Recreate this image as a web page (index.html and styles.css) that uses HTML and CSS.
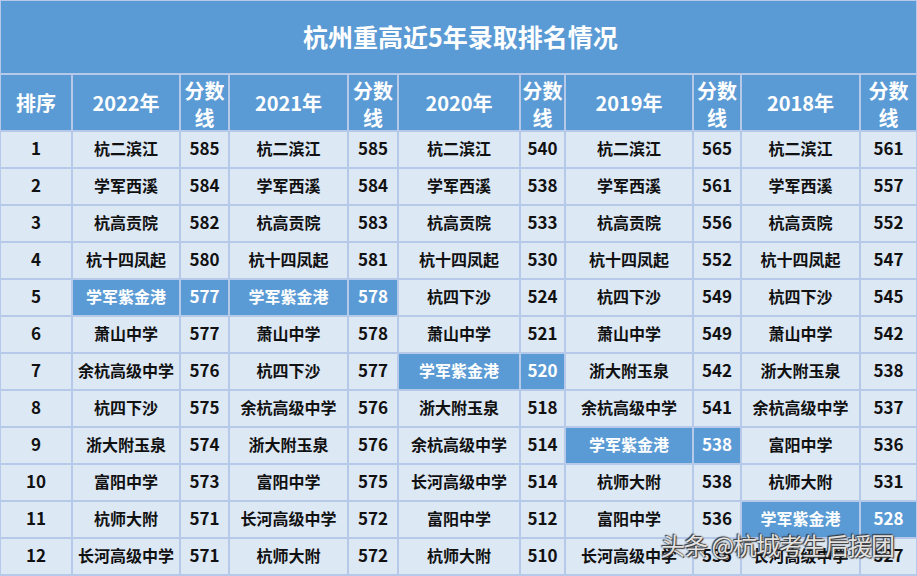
FILE: index.html
```html
<!DOCTYPE html>
<html lang="zh-CN">
<head>
<meta charset="utf-8">
<link rel="stylesheet" href="styles.css">
</head>
<body>
<div class="sheet">
  <div class="title">杭州重高近5年录取排名情况</div>
  <div class="hd">排序</div><div class="hd">2022年</div><div class="hd sc">分数线</div><div class="hd">2021年</div><div class="hd sc">分数线</div><div class="hd">2020年</div><div class="hd sc">分数线</div><div class="hd">2019年</div><div class="hd sc">分数线</div><div class="hd">2018年</div><div class="hd sc">分数线</div>

  <div class="c n">1</div><div class="c">杭二滨江</div><div class="c n">585</div><div class="c">杭二滨江</div><div class="c n">585</div><div class="c">杭二滨江</div><div class="c n">540</div><div class="c">杭二滨江</div><div class="c n">565</div><div class="c">杭二滨江</div><div class="c n">561</div>
  <div class="c n">2</div><div class="c">学军西溪</div><div class="c n">584</div><div class="c">学军西溪</div><div class="c n">584</div><div class="c">学军西溪</div><div class="c n">538</div><div class="c">学军西溪</div><div class="c n">561</div><div class="c">学军西溪</div><div class="c n">557</div>
  <div class="c n">3</div><div class="c">杭高贡院</div><div class="c n">582</div><div class="c">杭高贡院</div><div class="c n">583</div><div class="c">杭高贡院</div><div class="c n">533</div><div class="c">杭高贡院</div><div class="c n">556</div><div class="c">杭高贡院</div><div class="c n">552</div>
  <div class="c n">4</div><div class="c">杭十四凤起</div><div class="c n">580</div><div class="c">杭十四凤起</div><div class="c n">581</div><div class="c">杭十四凤起</div><div class="c n">530</div><div class="c">杭十四凤起</div><div class="c n">552</div><div class="c">杭十四凤起</div><div class="c n">547</div>
  <div class="c n">5</div><div class="c hl">学军紫金港</div><div class="c n hl">577</div><div class="c hl">学军紫金港</div><div class="c n hl">578</div><div class="c">杭四下沙</div><div class="c n">524</div><div class="c">杭四下沙</div><div class="c n">549</div><div class="c">杭四下沙</div><div class="c n">545</div>
  <div class="c n">6</div><div class="c">萧山中学</div><div class="c n">577</div><div class="c">萧山中学</div><div class="c n">578</div><div class="c">萧山中学</div><div class="c n">521</div><div class="c">萧山中学</div><div class="c n">549</div><div class="c">萧山中学</div><div class="c n">542</div>
  <div class="c n">7</div><div class="c">余杭高级中学</div><div class="c n">576</div><div class="c">杭四下沙</div><div class="c n">577</div><div class="c hl">学军紫金港</div><div class="c n hl">520</div><div class="c">浙大附玉泉</div><div class="c n">542</div><div class="c">浙大附玉泉</div><div class="c n">538</div>
  <div class="c n">8</div><div class="c">杭四下沙</div><div class="c n">575</div><div class="c">余杭高级中学</div><div class="c n">576</div><div class="c">浙大附玉泉</div><div class="c n">518</div><div class="c">余杭高级中学</div><div class="c n">541</div><div class="c">余杭高级中学</div><div class="c n">537</div>
  <div class="c n">9</div><div class="c">浙大附玉泉</div><div class="c n">574</div><div class="c">浙大附玉泉</div><div class="c n">576</div><div class="c">余杭高级中学</div><div class="c n">514</div><div class="c hl">学军紫金港</div><div class="c n hl">538</div><div class="c">富阳中学</div><div class="c n">536</div>
  <div class="c n">10</div><div class="c">富阳中学</div><div class="c n">573</div><div class="c">富阳中学</div><div class="c n">575</div><div class="c">长河高级中学</div><div class="c n">514</div><div class="c">杭师大附</div><div class="c n">538</div><div class="c">杭师大附</div><div class="c n">531</div>
  <div class="c n">11</div><div class="c">杭师大附</div><div class="c n">571</div><div class="c">长河高级中学</div><div class="c n">572</div><div class="c">富阳中学</div><div class="c n">512</div><div class="c">富阳中学</div><div class="c n">536</div><div class="c hl">学军紫金港</div><div class="c n hl">528</div>
  <div class="c n">12</div><div class="c">长河高级中学</div><div class="c n">571</div><div class="c">杭师大附</div><div class="c n">572</div><div class="c">杭师大附</div><div class="c n">510</div><div class="c">长河高级中学</div><div class="c n">535</div><div class="c">长河高级中学</div><div class="c n">527</div>
</div>
<div class="watermark">头条 @杭城考生后援团</div>
</body>
</html>
```
FILE: styles.css
```css
html, body {
  margin: 0;
  padding: 0;
  background: #b7c9e9;
}
body {
  width: 917px;
  height: 576px;
  overflow: hidden;
  position: relative;
  font-family: "Noto Sans CJK SC", "Noto Sans", sans-serif;
}
.sheet {
  display: grid;
  grid-template-columns: 70px 106px 47px 117px 48px 120px 43px 126px 46px 117px 55px;
  grid-template-rows: 72px 55px repeat(12, 35px);
  gap: 2px;
  padding: 1px;
  background: #b7c9e9;
}
.title {
  grid-column: 1 / -1;
  background: #5b9bd5;
  color: #fff;
  font-weight: 700;
  font-size: 25px;
  display: flex;
  align-items: center;
  justify-content: center;
  padding-bottom: 2px;
  padding-left: 4px;
}
.hd {
  background: #5b9bd5;
  color: #fff;
  font-weight: 700;
  font-size: 20px;
  display: flex;
  align-items: center;
  justify-content: center;
  text-align: center;
  padding-bottom: 1px;
}
.hd.sc {
  line-height: 27px;
  padding-top: 2px;
  padding-bottom: 0;
}
.c {
  background: #dde8f5;
  color: #111;
  font-weight: 700;
  font-size: 16px;
  display: flex;
  align-items: center;
  justify-content: center;
  white-space: nowrap;
  padding-bottom: 4px;
}
.c.n {
  font-size: 17px;
}
.c.hl {
  background: #5b9bd5;
  color: #fff;
}
.watermark {
  position: absolute;
  left: 661px;
  top: 527px;
  font-size: 24px;
  color: rgba(255, 255, 255, 0.85);
  letter-spacing: -1px;
  text-shadow: 0 0 2px #444, 1px 1px 1px #333, -1px -1px 1px #333;
  white-space: nowrap;
}
```
